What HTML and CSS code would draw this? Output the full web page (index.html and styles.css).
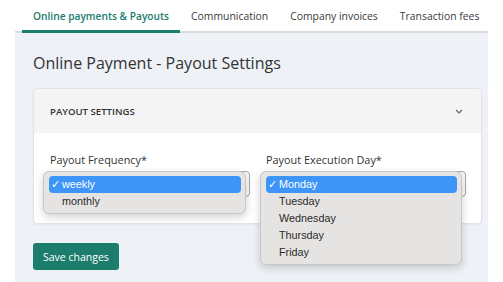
FILE: index.html
```html
<!DOCTYPE html>
<html lang="en">
<head>
  <meta charset="UTF-8" />
  <title>Online Payment - Payout Settings</title>
  <meta name="viewport" content="width=device-width, initial-scale=1" />
  <link rel="stylesheet" href="styles.css">
</head>
<body>
  <div class="page">
    <div class="tabs">
      <div class="tab active">Online payments &amp; Payouts</div>
      <div class="tab">Communication</div>
      <div class="tab">Company invoices</div>
      <div class="tab">Transaction fees</div>
    </div>

    <div class="content">
      <h1>Online Payment - Payout Settings</h1>

      <div class="card">
        <div class="card-header">
          <span>Payout Settings</span>
          <svg class="chevron" width="8" height="5" viewBox="0 0 8 5">
            <path d="M1 1 L4 4 L7 1" fill="none" stroke="#666" stroke-width="1.2" />
          </svg>
        </div>
        <div class="card-body">
          <div class="field">
            <label>Payout Frequency*</label>
            <div class="select">
              <!-- opened native menu -->
              <div class="menu menu-left">
                <div class="option selected"><span class="check">✓</span>weekly</div>
                <div class="option"><span class="check"></span>monthly</div>
              </div>
            </div>
          </div>
          <div class="field">
            <label>Payout Execution Day*</label>
            <div class="select">
              <div class="menu menu-right">
                <div class="option selected"><span class="check">✓</span>Monday</div>
                <div class="option"><span class="check"></span>Tuesday</div>
                <div class="option"><span class="check"></span>Wednesday</div>
                <div class="option"><span class="check"></span>Thursday</div>
                <div class="option"><span class="check"></span>Friday</div>
              </div>
            </div>
          </div>
        </div>
      </div>

      <button class="save">Save changes</button>
    </div>
  </div>
</body>
</html>
```

FILE: styles.css
```css
body {
  margin: 0;
  font-family: "Open Sans", sans-serif;
  color: #333;
  background: white;
}
.page {
  margin-left: 15px;
  width: 473px;
}

/* tabs */
.tabs {
  display: flex;
  padding-left: 7px;
  box-shadow: inset 0 -2px 0 #d9dadc;
}
.tab {
  padding: 8px 11px 6px;
  line-height: 16px;
  font-size: 10.4px;
  font-weight: 500;
  color: #3a3a3a;
  border-bottom: 3px solid transparent;
  white-space: nowrap;
}
.tab.active {
  font-weight: 600;
  font-size: 10.2px;
  color: #1b7d6d;
  border-bottom-color: #1b7d6d;
}

/* content */
.content {
  background: #eef1f6;
  padding: 18px 6px 20px 18px;
}
h1 {
  margin: 0 0 13px;
  font-size: 16px;
  line-height: 24px;
  font-weight: 400;
  color: #333;
}
.card {
  background: white;
  border: 1px solid #e1e3e7;
  border-radius: 4px;
  box-shadow: 0 1px 2px rgba(0, 0, 0, 0.05);
}
.card-header {
  height: 44px;
  padding: 0 17px 0 16px;
  display: flex;
  align-items: center;
  justify-content: space-between;
  background: #f4f4f4;
  border-radius: 4px 4px 0 0;
  font-size: 9.6px;
  font-weight: 600;
  text-transform: uppercase;
  color: #333;
}
.chevron {
  margin-right: 1px;
}
.card-body {
  display: grid;
  grid-template-columns: 1fr 1fr;
  gap: 16px;
  padding: 19px 15px 26px 16px;
}
.field label {
  display: block;
  font-size: 10.9px;
  line-height: 16px;
  font-weight: 500;
  color: #333;
  margin-bottom: 3px;
}
.select {
  position: relative;
  height: 24px;
  border: 1px solid #a8a8a8;
  border-radius: 4px;
  background: #fafafa;
}

/* opened dropdown menus */
.menu {
  position: absolute;
  top: -1px;
  left: -8px;
  width: 192px;
  padding: 4px 4px 3px 5px;
  background: #e6e4e2;
  border: 1px solid #c9c7c5;
  border-radius: 6px;
  box-shadow: 0 3px 8px rgba(0, 0, 0, 0.18);
  font-family: "Liberation Sans", sans-serif;
  font-size: 10.8px;
  color: #2a2a2a;
  z-index: 2;
}
.menu-right {
  left: -7px;
  width: 191px;
}
.option {
  height: 17px;
  line-height: 17px;
  padding-left: 2px;
  border-radius: 4px;
}
.option.selected {
  background: #3d95f7;
  color: white;
}
.check {
  display: inline-block;
  width: 11px;
}

.save {
  margin-top: 19px;
  height: 27px;
  padding: 0 10px;
  border: none;
  border-radius: 3px;
  background: #1d7d6d;
  color: white;
  font-family: "Open Sans", sans-serif;
  font-size: 10.5px;
  cursor: pointer;
}
```
